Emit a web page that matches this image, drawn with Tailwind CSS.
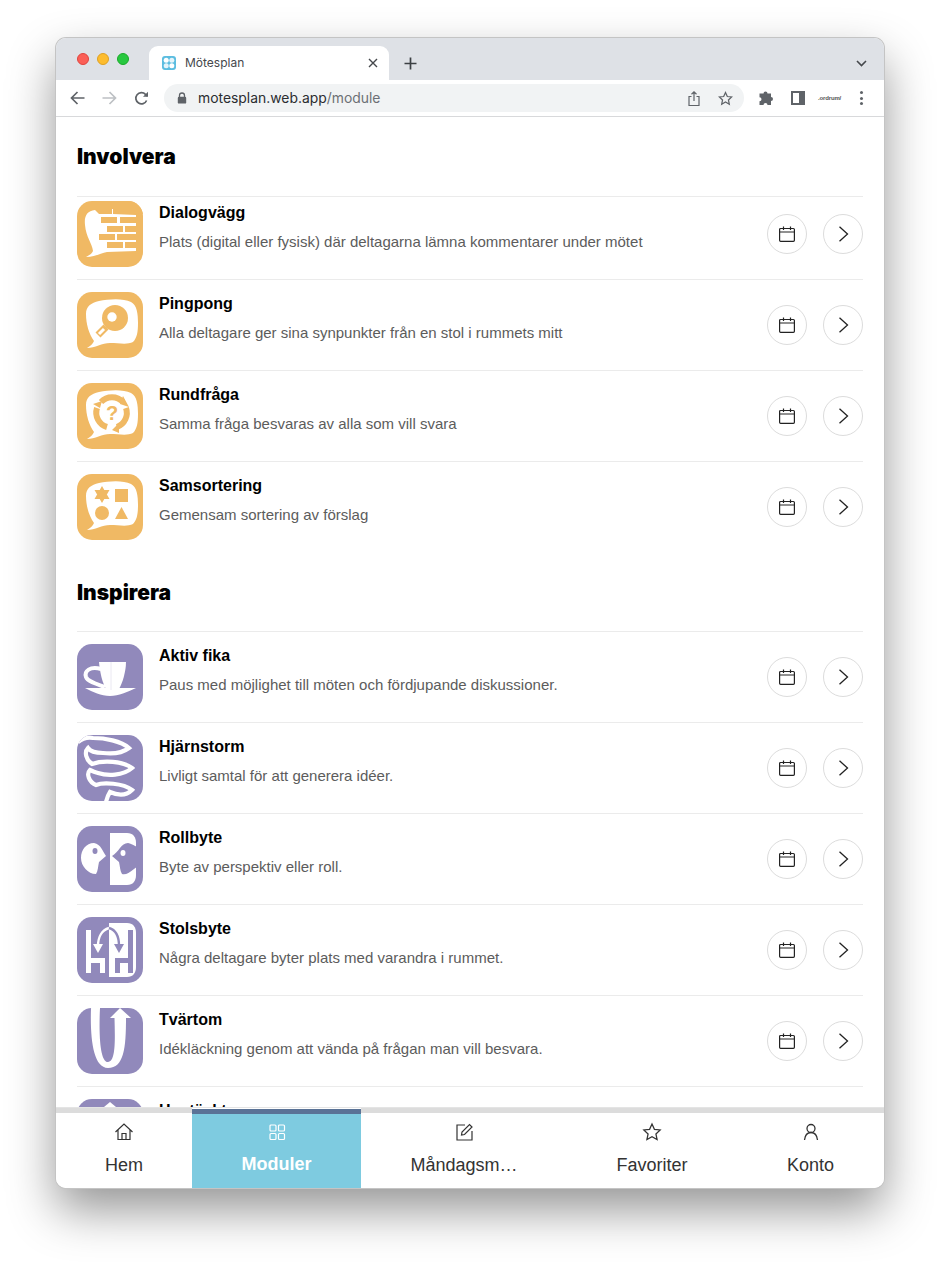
<!DOCTYPE html>
<html lang="en">
<head>
    <meta charset="UTF-8">
    <title>Mötesplan</title>
    <script src="https://cdn.jsdelivr.net/npm/@tailwindcss/browser@4"></script>
</head>
<body class="bg-white h-[1262px] overflow-hidden font-['Liberation_Sans',sans-serif]">

    <!-- Browser window -->
    <div class="ml-[56px] mt-[38px] w-[828px] h-[1150px] flex flex-col overflow-hidden rounded-[10px] bg-white shadow-[0_0_0_1px_#c4c4c4,0_22px_48px_rgba(0,0,0,0.42)] absolute">

        <!-- Tab strip -->
        <div class="h-[42px] shrink-0 bg-[#dee1e6] flex items-end relative">
            <div class="flex gap-[8px] ml-[21px] mb-[15px]">
                <div class="w-[12px] h-[12px] rounded-full bg-[#fb5f57] border border-[#e0443e]"></div>
                <div class="w-[12px] h-[12px] rounded-full bg-[#fdbc2e] border border-[#dea123]"></div>
                <div class="w-[12px] h-[12px] rounded-full bg-[#28c840] border border-[#1aab29]"></div>
            </div>
            <div class="ml-[20px] w-[240px] h-[34px] bg-white rounded-t-[9px] flex items-center pl-[13px] pr-[11px] font-['Inter',sans-serif] text-[12px] text-[#45484c]">
                <svg width="14" height="14" viewBox="0 0 14 14"><rect width="14" height="14" rx="3" fill="#5cbde0"/><circle cx="4.200" cy="4.200" r="2.500" fill="#fff"/><circle cx="9.800" cy="4.200" r="2.500" fill="#e4f4fa"/><circle cx="4.200" cy="9.800" r="2.500" fill="#e4f4fa"/><circle cx="9.800" cy="9.800" r="2.500" fill="#fff"/></svg>
                <span class="ml-[9px]">Mötesplan</span>
                <svg class="ml-auto" width="10" height="10" viewBox="0 0 10 10" fill="none" stroke="#45484c" stroke-width="1.4"><path d="M1 1l8 8M9 1l-8 8"/></svg>
            </div>
            <svg class="ml-[15px] mb-[10px]" width="13" height="13" viewBox="0 0 13 13" fill="none" stroke="#3c4043" stroke-width="1.7"><path d="M6.500 0.500v12M0.500 6.500h12"/></svg>
            <svg class="ml-auto mr-[17px] mb-[13px]" width="11" height="7" viewBox="0 0 11 7" fill="none" stroke="#45484c" stroke-width="1.6"><path d="M1 1l4.500 4.500L10 1"/></svg>
        </div>

        <!-- Toolbar -->
        <div class="h-[37px] shrink-0 border-b border-[#d8d9db] flex items-center bg-white">
            <svg class="ml-[14px]" width="15" height="14" viewBox="0 0 15 14" fill="none" stroke="#5f6368" stroke-width="1.7"><path d="M14.500 7H1.500M7.500 1l-6 6 6 6"/></svg>
            <svg class="ml-[17px]" width="15" height="14" viewBox="0 0 15 14" fill="none" stroke="#bdc0c4" stroke-width="1.7"><path d="M0.500 7h13M7.500 1l6 6-6 6"/></svg>
            <svg class="ml-[17px]" width="15" height="15" viewBox="0 0 15 15" fill="none" stroke="#5f6368" stroke-width="1.7"><path d="M12.600 9.500A5.600 5.600 0 1 1 11.500 3.400L13.500 5.200"/><path d="M14 0.800v5h-5" stroke="none" fill="#5f6368"/></svg>
            <div class="ml-[15px] w-[580px] h-[28px] rounded-full bg-[#f1f3f4] flex items-center pl-[13px] pr-[11px] font-['Inter',sans-serif] text-[13.9px]">
                <svg width="10" height="12" viewBox="0 0 10 12"><path d="M2.500 5V3.500a2.500 2.500 0 0 1 5 0V5" fill="none" stroke="#5f6368" stroke-width="1.3"/><rect x="0.800" y="4.800" width="8.400" height="6.800" rx="1.200" fill="#5f6368"/></svg>
                <span class="ml-[11px] text-[#2b2d30]">motesplan.web.app<span class="text-[#6c7075]">/module</span></span>
                <svg class="ml-auto" width="12" height="15" viewBox="0 0 12 15" fill="none" stroke="#5f6368" stroke-width="1.2"><path d="M3.500 5.500H1v9h10v-9H8.500M6 10V1M3.500 3.200L6 .9l2.500 2.300"/></svg>
                <svg class="ml-[18px]" width="15" height="15" viewBox="0 0 24 24" fill="none" stroke="#5f6368" stroke-width="2"><path d="M12 2.500l2.900 6.300 6.900.8-5.100 4.700 1.400 6.800L12 17.700l-6.100 3.400 1.400-6.800L2.200 9.600l6.900-.8z"/></svg>
            </div>
            <svg class="ml-[14px]" width="15" height="15" viewBox="0 0 15 15" fill="#5f6368"><path d="M5.500 2.500a2 2 0 0 1 4 0H13v3.600a2 2 0 0 1 0 4V14H9.500a2 2 0 0 0-4 0H1.500v-3.800a2 2 0 0 0 0-4V2.500z"/></svg>
            <div class="ml-[18px] w-[14px] h-[14px] border-[2px] border-[#5f6368] border-r-[6px]"></div>
            <span class="ml-[13px] w-[22px] text-[6px] leading-none font-bold text-[#555] tracking-tight whitespace-nowrap">.ordrum/</span>
            <div class="ml-[20px] flex flex-col gap-[2.500px]">
                <div class="w-[3px] h-[3px] rounded-full bg-[#5f6368]"></div>
                <div class="w-[3px] h-[3px] rounded-full bg-[#5f6368]"></div>
                <div class="w-[3px] h-[3px] rounded-full bg-[#5f6368]"></div>
            </div>
        </div>

        <!-- Module list -->
        <div class="flex-1 overflow-hidden px-[21px]">
            <h2 class="font-['Inter',sans-serif] font-black text-[21px] leading-[28px] text-black mt-[26px] mb-[25px]">Involvera</h2>
            <div id="involvera"></div>
            <h2 class="font-['Inter',sans-serif] font-black text-[21px] leading-[28px] text-black mt-[27px] mb-[24px]">Inspirera</h2>
            <div id="inspirera"></div>
        </div>

        <!-- Bottom nav -->
        <div class="h-[81px] shrink-0 flex border-t border-[#e4e4e4] bg-white text-[18px] text-[#333] relative">
            <a class="w-[136px] flex flex-col items-center border-t-[5px] border-[#dcdcdc]">
                <svg class="mt-[9px]" width="20" height="20" viewBox="0 0 20 20" fill="none" stroke="#333" stroke-width="1.200"><path d="M1.500 10L10 2l8.500 8M4 8v9.500h12V8M8 17.500v-6h4v6"/></svg>
                <span class="mt-[10px]">Hem</span>
            </a>
            <a class="w-[169px] flex flex-col items-center border-t-[5px] border-[#5a7296] bg-[#7ecbe0] text-white font-bold mt-[1px]">
                <svg class="mt-[9px]" width="18" height="18" viewBox="0 0 18 18" fill="none" stroke="#fff" stroke-width="1.200"><rect x="2" y="2" width="6" height="6" rx="1"/><rect x="10.500" y="2" width="6" height="6" rx="1"/><rect x="2" y="10.500" width="6" height="6" rx="1"/><rect x="10.500" y="10.500" width="6" height="6" rx="1"/></svg>
                <span class="mt-[10px]">Moduler</span>
            </a>
            <a class="w-[206px] flex flex-col items-center border-t-[5px] border-[#dcdcdc]">
                <svg class="mt-[9px]" width="20" height="20" viewBox="0 0 20 20" fill="none" stroke="#333" stroke-width="1.200"><path d="M11 3H3v15h15V9"/><path d="M7.500 13l.5-3 7.500-7.500 2.500 2.500-7.500 7.500z"/></svg>
                <span class="mt-[10px]">Måndagsm…</span>
            </a>
            <a class="w-[170px] flex flex-col items-center border-t-[5px] border-[#dcdcdc]">
                <svg class="mt-[9px]" width="20" height="20" viewBox="0 0 24 24" fill="none" stroke="#333" stroke-width="1.500"><path d="M12 2.500l2.900 6.300 6.900.8-5.100 4.700 1.400 6.800L12 17.700l-6.100 3.400 1.400-6.800L2.200 9.600l6.900-.8z"/></svg>
                <span class="mt-[10px]">Favoriter</span>
            </a>
            <a class="w-[147px] flex flex-col items-center border-t-[5px] border-[#dcdcdc]">
                <svg class="mt-[9px]" width="20" height="20" viewBox="0 0 20 20" fill="none" stroke="#333" stroke-width="1.300"><circle cx="10" cy="6.500" r="4"/><path d="M3.500 18c.500-4.500 3-7.500 6.500-7.500s6 3 6.500 7.500"/></svg>
                <span class="mt-[10px]">Konto</span>
            </a>
        </div>
    </div>

    <script>
        const orange = "#f0b964";
        const purple = "#9189bb";
        const bubble = `<path fill="#fff" d="M9 22C9 14 14 11 22 9C32 7 46 6 54 10C60 13 61 22 61 31C61 40 60 46 56 50C50 53 42 51 33 51C25 51 18 56 10 56C13 54 16 52 17 49C12 42 9 32 9 22Z"/>`;

        const icons = {
            dialog: `<path fill="#fff" d="M18 9C10 10 7 15 8 24C9 36 15 42 16 50C15 53 12 54 9 56C18 56 24 52 30 51L59 50V14L36 13V8H35V13L22 13Z"/>
                <g fill="${orange}"><rect x="24" y="16" width="16" height="6"/><rect x="43" y="16" width="16" height="6"/><rect x="30" y="25" width="16" height="6"/><rect x="48" y="25" width="12" height="6"/><rect x="22" y="33" width="16" height="6"/><rect x="40" y="33" width="20" height="6"/><rect x="30" y="41" width="16" height="6"/><rect x="48" y="41" width="12" height="6"/><path d="M37 0h29v13L37 12z"/></g>`,
            pingpong: `${bubble}<circle cx="38" cy="26" r="13" fill="${orange}"/><circle cx="35" cy="25" r="4.700" fill="#fff"/><path d="M29 35L21 43" stroke="${orange}" stroke-width="7"/><path d="M27 37L22 42" stroke="#fff" stroke-width="3"/>`,
            rund: `${bubble}<g fill="none" stroke="${orange}" stroke-width="6"><path d="M24 19A15 15 0 0 1 46 19"/><path d="M49 25A15 15 0 0 1 40 44"/><path d="M20 25A15 15 0 0 0 30 44"/></g><path fill="${orange}" d="M46 13l6 11-9-3zM35 47l7-7v10zM23 25l-7-4 9-3z"/><text x="35" y="37" text-anchor="middle" font-family="Liberation Sans" font-weight="700" font-size="20" fill="${orange}">?</text>`,
            sort: `${bubble}<path fill="${orange}" d="M25 12l7.500 13h-15zM25 29l-7.500-13h15z"/><rect x="38" y="15" width="13" height="13" fill="${orange}"/><circle cx="25" cy="39" r="7" fill="${orange}"/><path fill="${orange}" d="M44.500 33L51 45H38z"/>`,
            fika: `<path fill="#fff" d="M22 18H49C49 28 45 40 42 45H29C26 40 23 30 22 18Z"/><path fill="none" stroke="#fff" stroke-width="4" d="M24 25C13 22 7 27 9 33C11 38 20 40 28 43"/><path fill="#fff" d="M8 44H59C50 48 42 52 33 52C24 52 16 48 8 44Z"/><path stroke="#e4e2ef" stroke-width=".8" d="M34 18V46"/>`,
            storm: `<path fill="none" stroke="#fff" stroke-width="4.200" d="M1 7C6 3 10 2 16 3C28 3 44 6 52 13C44 19 34 19 26 18C18 18 13 16 11 13C7 17 9 25 15 29C26 25 46 26 55 33C46 41 30 41 21 38C17 37 15 36 13 35C9 39 12 47 19 50C26 47 46 48 55 55C50 60 42 61 33 57C31 60 30 63 29 67"/>`,
            roll: `<path fill="#fff" d="M17 17C9 17 4 24 4 32C4 40 11 48 19 48C21 45 21 40 22 36L29 30C26 26 24 18 17 17Z"/><ellipse cx="18" cy="25" rx="2.500" ry="3" fill="${purple}"/><path fill="#fff" d="M33 7H50C56 7 59 11 59 17V49C59 55 56 59 50 59H33Z"/><path fill="${purple}" d="M51 17C44 17 42 26 35 30L42 36C43 40 43 45 45 48C52 50 58 40 66 38V22C60 22 56 18 51 17Z"/><ellipse cx="46" cy="27" rx="2.500" ry="3" fill="#fff"/>`,
            stol: `<path fill="#fff" d="M9 13h5v28h14v15h-5V46h-9v10H9z"/><path fill="#fff" d="M32 6H50C56 6 59 10 59 16V50C59 56 56 60 50 60H32Z"/><path fill="${purple}" d="M38 41h13V13h5v43h-5V46H43v10h-5z"/><path fill="none" stroke="#fff" stroke-width="2.400" d="M32 11C25 13 21 20 21 29"/><path fill="#fff" d="M16 27l5 9 5-9z"/><path fill="none" stroke="${purple}" stroke-width="2.400" d="M32 11C39 13 42 20 42 29"/><path fill="${purple}" d="M37 27l5 9 5-9z"/>`,
            tvart: `<path fill="#fff" d="M14 0H23C22 20 22 54 31 54C39 54 38 30 37.500 10H33L43 0L54 10H49C49 40 47 60 31 60C16 60 13 30 14 0Z"/>`,
            hus: `<path fill="#fff" d="M27 8L33 3L39 8Z"/>`,
        };

        const involvera = [
            ["dialog", "Dialogvägg", "Plats (digital eller fysisk) där deltagarna lämna kommentarer under mötet"],
            ["pingpong", "Pingpong", "Alla deltagare ger sina synpunkter från en stol i rummets mitt"],
            ["rund", "Rundfråga", "Samma fråga besvaras av alla som vill svara"],
            ["sort", "Samsortering", "Gemensam sortering av förslag"],
        ];
        const inspirera = [
            ["fika", "Aktiv fika", "Paus med möjlighet till möten och fördjupande diskussioner."],
            ["storm", "Hjärnstorm", "Livligt samtal för att generera idéer."],
            ["roll", "Rollbyte", "Byte av perspektiv eller roll."],
            ["stol", "Stolsbyte", "Några deltagare byter plats med varandra i rummet."],
            ["tvart", "Tvärtom", "Idékläckning genom att vända på frågan man vill besvara."],
            ["hus", "Hustäckt", ""],
        ];

        function renderRow(row, color, first) {
            const [icon, title, text] = row;
            return `<div class="flex border-t border-[#ebebeb] ${first ? "pt-[4px]" : "pt-[12px]"} pb-[12px]">
                <svg class="shrink-0 rounded-[15px]" width="66" height="66" viewBox="0 0 66 66" style="background:${color}">${icons[icon]}</svg>
                <div class="ml-[16px] flex-1">
                    <div class="text-[16px] leading-[20px] font-bold text-black mt-[2px]">${title}</div>
                    <div class="text-[15px] leading-[20px] text-[#5c5c5c] mt-[9px]">${text}</div>
                </div>
                <div class="flex items-center gap-[16px]">
                    <button class="w-[40px] h-[40px] rounded-full border border-[#dcdcdc] flex items-center justify-center">
                        <svg width="16" height="16" viewBox="0 0 16 16" fill="none" stroke="#222" stroke-width="1.200"><rect x=".6" y="2.500" width="14.800" height="12.800" rx="1"/><path d="M.6 6h14.800M4.500 .5v3.500M11.500 .5v3.500"/></svg>
                    </button>
                    <button class="w-[40px] h-[40px] rounded-full border border-[#dcdcdc] flex items-center justify-center">
                        <svg width="11" height="16" viewBox="0 0 11 16" fill="none" stroke="#222" stroke-width="1.300"><path d="M1.500 .8L9.500 8l-8 7.200"/></svg>
                    </button>
                </div>
            </div>`;
        }

        document.getElementById("involvera").innerHTML = involvera.map((r, i) => renderRow(r, orange, i === 0)).join("");
        document.getElementById("inspirera").innerHTML = inspirera.map(r => renderRow(r, purple, false)).join("");
    </script>

</body>
</html>
